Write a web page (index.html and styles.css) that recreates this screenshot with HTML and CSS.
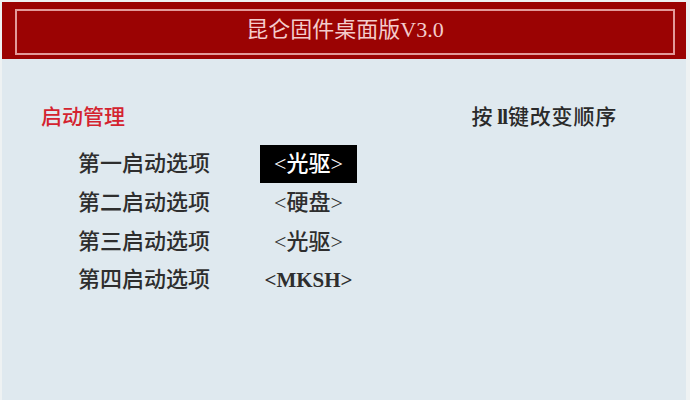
FILE: index.html
```html
<!DOCTYPE html>
<html lang="zh">
<head>
<meta charset="utf-8">
<title>昆仑固件桌面版V3.0</title>
<link rel="stylesheet" href="styles.css">
</head>
<body>
<div class="screen">
  <header class="header">
    <div class="header-inner">昆仑固件桌面版V3.0</div>
  </header>
  <main class="main">
    <div class="top">
      <div class="section-title">启动管理</div>
      <div class="hint">按<span class="keys">ll</span>键改变顺序</div>
    </div>
    <div class="rows">
      <div class="label">第一启动选项</div>
      <div class="value selected">&lt;光驱&gt;</div>
      <div class="label">第二启动选项</div>
      <div class="value">&lt;硬盘&gt;</div>
      <div class="label">第三启动选项</div>
      <div class="value">&lt;光驱&gt;</div>
      <div class="label">第四启动选项</div>
      <div class="value latin">&lt;MKSH&gt;</div>
    </div>
  </main>
</div>
</body>
</html>
```
FILE: styles.css
```css
html, body {
  margin: 0;
  padding: 0;
  height: 100%;
}
body {
  background: #eef2f3;
  font-family: "Liberation Serif", "Noto Sans CJK SC", serif;
}
.screen {
  margin: 2px 4px 0 2px;
  height: 398px;
  background: #dfe9ef;
  display: flex;
  flex-direction: column;
}
.header {
  background: #9b0303;
  height: 57px;
  box-sizing: border-box;
  padding: 7px 11px 4px 13px;
  display: flex;
}
.header-inner {
  flex: 1;
  border: 2px solid #e39a9a;
  display: flex;
  align-items: center;
  justify-content: center;
  color: #f4cccc;
  font-size: 22px;
  line-height: 24px;
  padding-bottom: 4px;
}
.main {
  padding: 46px 0 0 0;
}
.top {
  display: flex;
  justify-content: space-between;
  align-items: center;
  padding: 0 69px 0 39px;
  height: 24px;
}
.section-title {
  color: #d4232f;
  font-size: 21px;
  line-height: 24px;
  font-weight: 500;
}
.hint {
  color: #2a2a2a;
  font-size: 21px;
  line-height: 24px;
  font-weight: 500;
  letter-spacing: 0.8px;
}
.keys {
  font-weight: bold;
  margin: 0 1px 0 4px;
  letter-spacing: -1px;
}
.rows {
  margin-top: 16px;
  padding-left: 76px;
  display: grid;
  grid-template-columns: 182px 97px;
  grid-auto-rows: 38.7px;
  align-items: center;
}
.label {
  color: #2e2e2e;
  font-size: 22px;
  line-height: 26px;
  font-weight: 500;
}
.value {
  color: #2e2e2e;
  font-size: 22px;
  line-height: 26px;
  text-align: center;
  font-weight: 500;
}
.value.selected {
  background: #000;
  color: #fff;
  height: 38px;
  line-height: 38px;
}
.value.latin {
  font-weight: bold;
  font-size: 21px;
}
```
